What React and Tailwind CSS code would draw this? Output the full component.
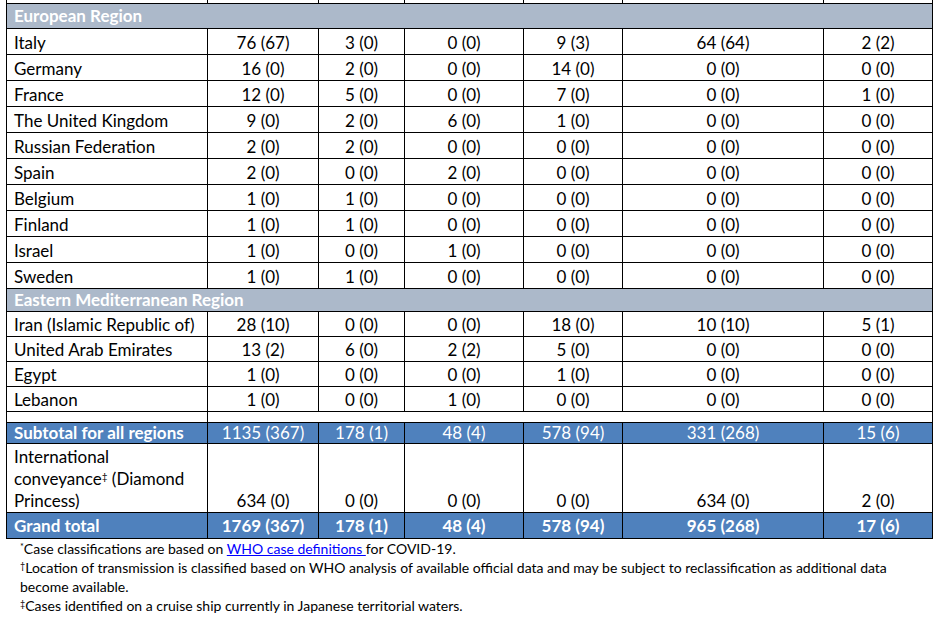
import React from "react";

const europe = [
  ["Italy", "76 (67)", "3 (0)", "0 (0)", "9 (3)", "64 (64)", "2 (2)"],
  ["Germany", "16 (0)", "2 (0)", "0 (0)", "14 (0)", "0 (0)", "0 (0)"],
  ["France", "12 (0)", "5 (0)", "0 (0)", "7 (0)", "0 (0)", "1 (0)"],
  ["The United Kingdom", "9 (0)", "2 (0)", "6 (0)", "1 (0)", "0 (0)", "0 (0)"],
  ["Russian Federation", "2 (0)", "2 (0)", "0 (0)", "0 (0)", "0 (0)", "0 (0)"],
  ["Spain", "2 (0)", "0 (0)", "2 (0)", "0 (0)", "0 (0)", "0 (0)"],
  ["Belgium", "1 (0)", "1 (0)", "0 (0)", "0 (0)", "0 (0)", "0 (0)"],
  ["Finland", "1 (0)", "1 (0)", "0 (0)", "0 (0)", "0 (0)", "0 (0)"],
  ["Israel", "1 (0)", "0 (0)", "1 (0)", "0 (0)", "0 (0)", "0 (0)"],
  ["Sweden", "1 (0)", "1 (0)", "0 (0)", "0 (0)", "0 (0)", "0 (0)"],
];

const emr = [
  ["Iran (Islamic Republic of)", "28 (10)", "0 (0)", "0 (0)", "18 (0)", "10 (10)", "5 (1)"],
  ["United Arab Emirates", "13 (2)", "6 (0)", "2 (2)", "5 (0)", "0 (0)", "0 (0)"],
  ["Egypt", "1 (0)", "0 (0)", "0 (0)", "1 (0)", "0 (0)", "0 (0)"],
  ["Lebanon", "1 (0)", "0 (0)", "1 (0)", "0 (0)", "0 (0)", "0 (0)"],
];

function DataRow({ row, h }) {
  return (
    <>
      {row.map((v, i) => (
        <div
          key={i}
          className={
            "border-r border-b border-black flex items-center whitespace-nowrap pt-[2px] " +
            h +
            (i === 0 ? " pl-[7px]" : " justify-center")
          }
        >
          {v}
        </div>
      ))}
    </>
  );
}

function Band({ label, h }) {
  return (
    <div
      className={
        "col-span-7 bg-[#ACB9CA] text-white font-bold border-r border-b border-black flex items-center pl-[7px] " +
        h
      }
    >
      {label}
    </div>
  );
}

export default function App() {
  const subtotal = ["1135 (367)", "178 (1)", "48 (4)", "578 (94)", "331 (268)", "15 (6)"];
  const intl = ["634 (0)", "0 (0)", "0 (0)", "0 (0)", "634 (0)", "2 (0)"];
  const grand = ["1769 (367)", "178 (1)", "48 (4)", "578 (94)", "965 (268)", "17 (6)"];
  return (
    <div className="w-[937px] h-[626px] bg-white overflow-hidden font-['Lato',sans-serif] text-black">
      <div className="ml-[6px] w-[927px] grid grid-cols-[201px_111px_86px_119px_99px_201px_109px] border-l border-black text-[17px] leading-[22px]">
        {[0, 1, 2, 3, 4, 5, 6].map((i) => (
          <div key={i} className="h-[4px] border-r border-b border-black" />
        ))}
        <Band label="European Region" h="h-[25px]" />
        {europe.map((r, i) => (
          <DataRow key={i} row={r} h="h-[26px]" />
        ))}
        <Band label="Eastern Mediterranean Region" h="h-[23px]" />
        {emr.map((r, i) => (
          <DataRow key={i} row={r} h="h-[25px]" />
        ))}
        <div className="h-[11px] border-r border-b border-black" />
        <div className="col-span-6 h-[11px] border-r border-b border-black" />
        <div className="h-[21px] bg-[#4F81BD] text-white font-bold border-r border-b border-black flex items-center pl-[7px] whitespace-nowrap">
          Subtotal for all regions
        </div>
        {subtotal.map((v, i) => (
          <div
            key={i}
            className="h-[21px] bg-[#4F81BD] text-white border-r border-b border-black flex items-center justify-center"
          >
            {v}
          </div>
        ))}
        <div className="h-[69px] border-r border-b border-black flex items-end pl-[7px] leading-[22px]">
          <div>
            International
            <br />
            conveyance<sup className="text-[10px]">‡</sup> (Diamond
            <br />
            Princess)
          </div>
        </div>
        {intl.map((v, i) => (
          <div
            key={i}
            className="h-[69px] border-r border-b border-black flex items-end justify-center leading-[22px]"
          >
            {v}
          </div>
        ))}
        <div className="h-[26px] bg-[#4F81BD] text-white font-bold border-r border-b border-black flex items-center pl-[7px]">
          Grand total
        </div>
        {grand.map((v, i) => (
          <div
            key={i}
            className="h-[26px] bg-[#4F81BD] text-white font-bold border-r border-b border-black flex items-center justify-center"
          >
            {v}
          </div>
        ))}
      </div>
      <div className="pl-[20px] text-[14px] leading-[19px]">
        <div>
          <sup className="text-[9px]">*</sup>Case classifications are based on{" "}
          <span className="text-[#0000FF] underline">WHO case definitions </span>for COVID-19.
        </div>
        <div className="whitespace-nowrap">
          <sup className="text-[9px]">†</sup>Location of transmission is classified based on WHO analysis of
          available official data and may be subject to reclassification as additional data
        </div>
        <div>become available.</div>
        <div>
          <sup className="text-[9px]">‡</sup>Cases identified on a cruise ship currently in Japanese territorial
          waters.
        </div>
      </div>
    </div>
  );
}
